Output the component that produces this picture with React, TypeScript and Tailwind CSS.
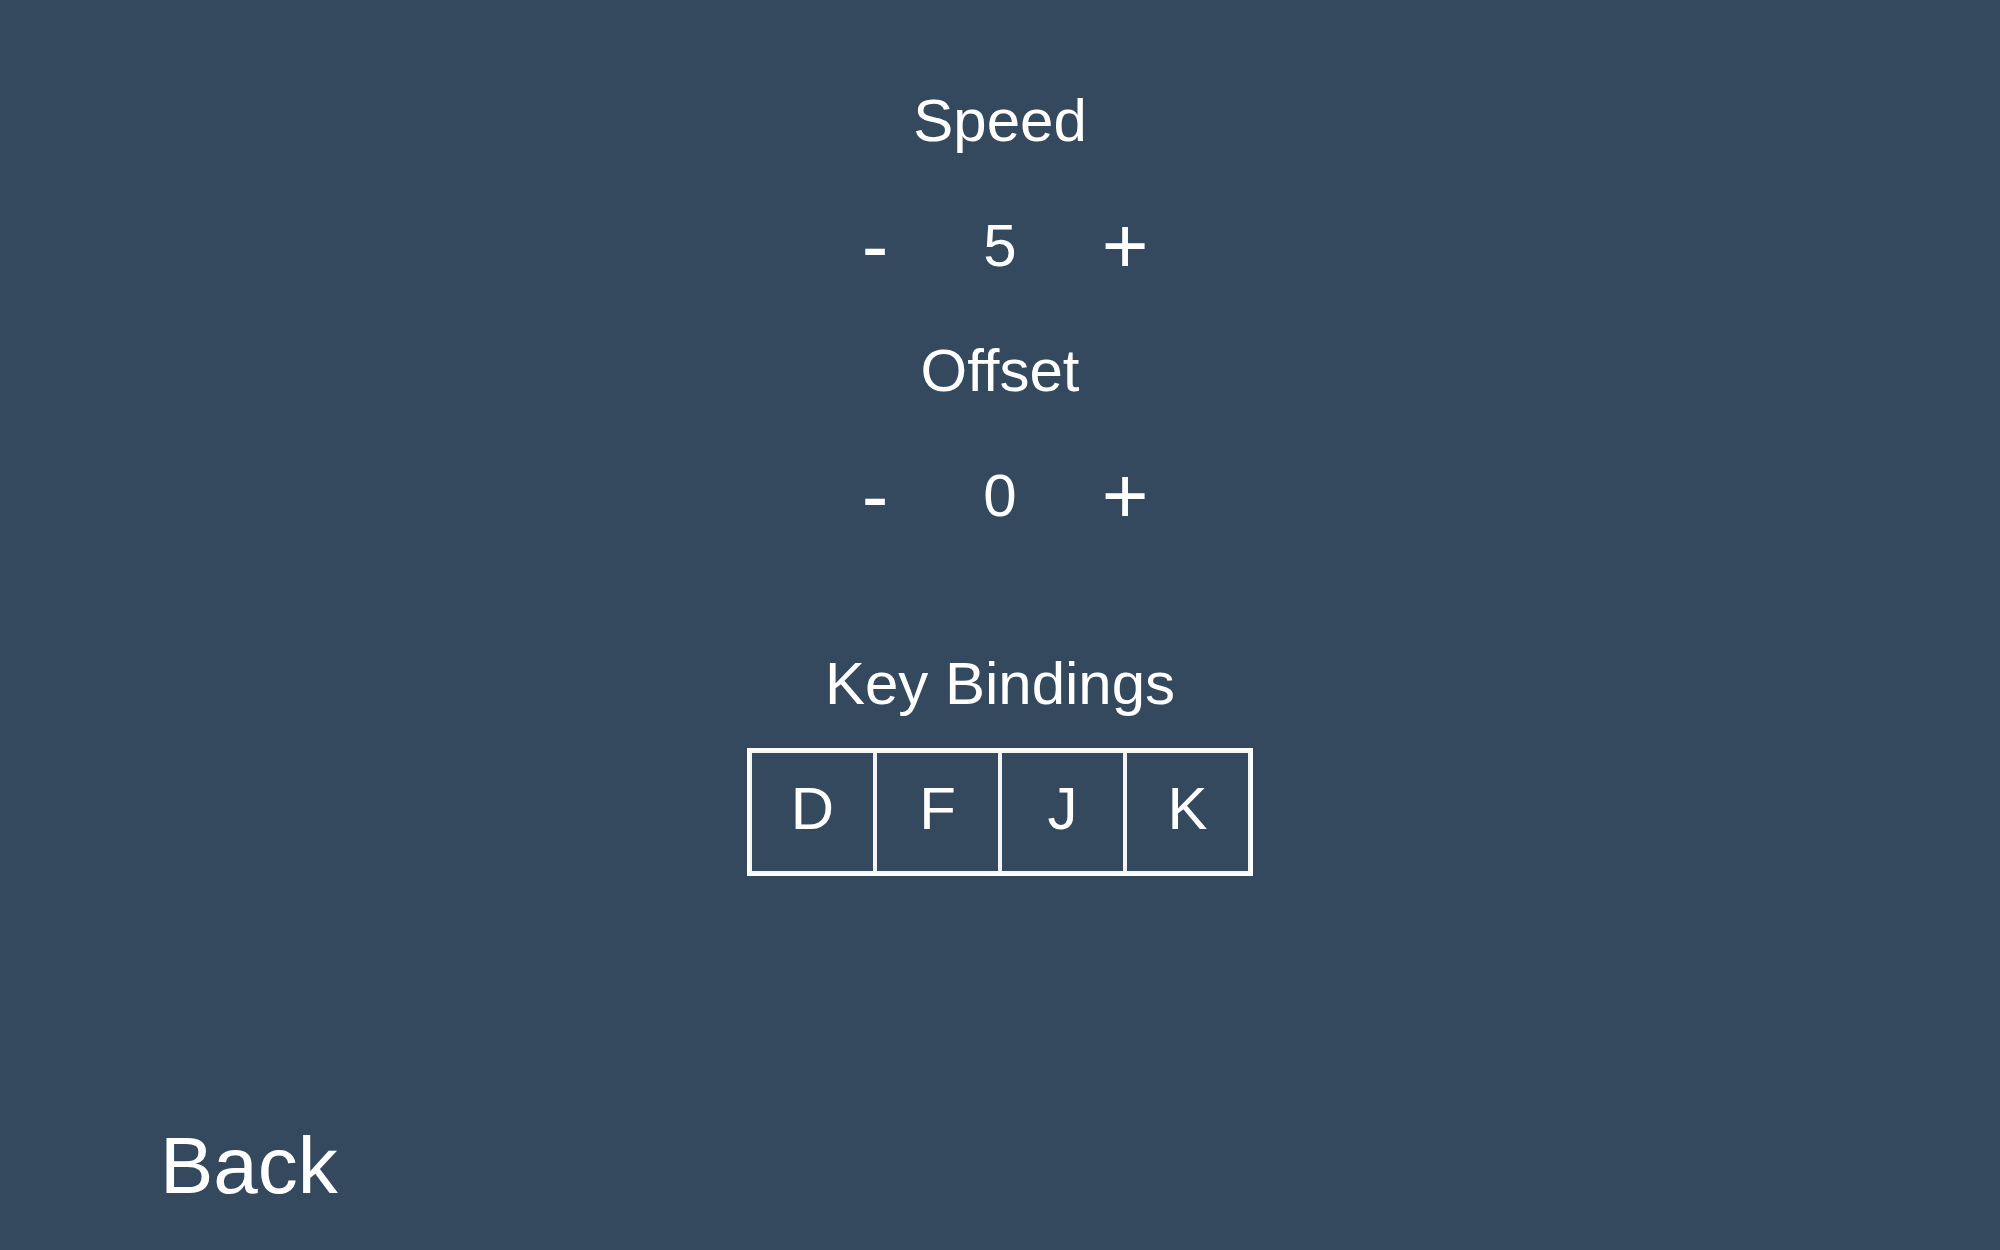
import React from "react";

function Stepper({ value }: { value: number }) {
  return (
    <div className="h-[125px] flex items-center justify-center">
      <div className="grid grid-cols-3 w-[375px] items-center">
        <button className="text-[80px] text-center text-white leading-normal">-</button>
        <span className="text-[60px] text-center text-white leading-normal">{value}</span>
        <button className="text-[80px] text-center text-white leading-normal">+</button>
      </div>
    </div>
  );
}

function Label({ children }: { children: React.ReactNode }) {
  return (
    <div className="h-[125px] flex items-center justify-center text-[60px] leading-normal text-white">
      {children}
    </div>
  );
}

export default function App() {
  const keys = ["D", "F", "J", "K"];
  return (
    <div
      className="w-full h-screen bg-[#34495e] flex flex-col overflow-hidden"
      style={{ fontFamily: '"Liberation Sans", Arial, sans-serif' }}
    >
      <div className="flex flex-col items-center pt-[58px]">
        <Label>Speed</Label>
        <Stepper value={5} />
        <Label>Offset</Label>
        <Stepper value={0} />
        <div className="h-[63px]" />
        <Label>Key Bindings</Label>
        <div className="mt-[2px] flex border-[3px] border-white">
          {keys.map((k) => (
            <div
              key={k}
              className="w-[125px] h-[122px] border-2 border-[#f2f4f6] flex items-center justify-center pb-[6px] text-[60px] leading-normal text-white"
            >
              {k}
            </div>
          ))}
        </div>
      </div>
      <div className="mt-auto pl-[160px] pb-[24px]">
        <button className="text-[80px] leading-normal text-white">Back</button>
      </div>
    </div>
  );
}
